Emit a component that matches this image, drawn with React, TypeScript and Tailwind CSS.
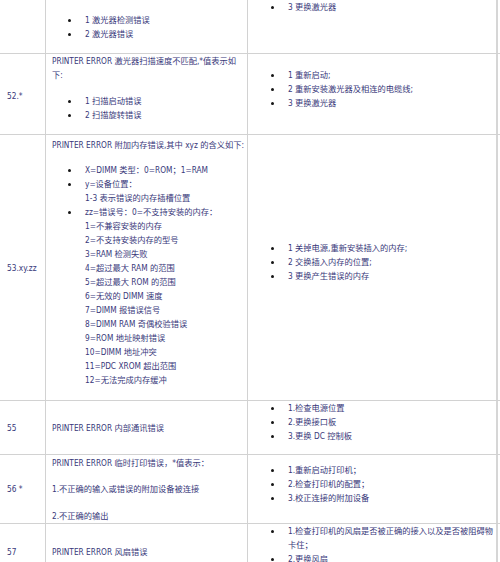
import React from "react";

const Dot = () => (
  <span className="w-[39px] shrink-0 flex">
    <span className="ml-[22px] mt-[5.5px] w-[3px] h-[3px] rounded-full bg-[#151515]" />
  </span>
);

const Li = ({ children }: { children: React.ReactNode }) => (
  <li className="flex whitespace-nowrap">
    <Dot />
    <span>{children}</span>
  </li>
);

const Li3 = ({ children }: { children: React.ReactNode }) => (
  <li className="flex whitespace-nowrap">
    <span className="w-[40px] shrink-0 flex">
      <span className="ml-[23px] mt-[5.5px] w-[3px] h-[3px] rounded-full bg-[#151515]" />
    </span>
    <span>{children}</span>
  </li>
);

export default function App() {
  const c1 = "border-r border-[#d2d2d2] pl-[7px]";
  const c2 = "border-r border-[#d2d2d2]";
  const c3 = "border-r-2 border-[#d6d6d6]";
  const row = "grid grid-cols-[46px_202px_250px] border-b border-[#d2d2d2]";
  return (
    <div className="w-[500px] h-[562px] overflow-hidden bg-white text-[8.25px] leading-[14px] text-[#38387a] font-['DejaVu_Sans_Condensed','DejaVu_Sans','Noto_Sans_CJK_SC',sans-serif]">
      {/* row 0 */}
      <div className={`${row} h-[54px]`}>
        <div className={c1} />
        <div className={`${c2} pt-[13px]`}>
          <ul>
            <Li>1 激光器检测错误</Li>
            <Li>2 激光器错误</Li>
          </ul>
        </div>
        <div className={c3}>
          <ul>
            <Li3>3 更换激光器</Li3>
          </ul>
        </div>
      </div>

      {/* row 1 */}
      <div className={`${row} h-[81px]`}>
        <div className={`${c1} flex items-center pt-[4px]`}>52.*</div>
        <div className={`${c2} pl-[6px]`}>
          <p className="whitespace-nowrap">PRINTER ERROR 激光器扫描速度不匹配,*值表示如</p>
          <p>下:</p>
          <ul className="mt-[12px] -ml-[6px]">
            <Li>1 扫描启动错误</Li>
            <Li>2 扫描旋转错误</Li>
          </ul>
        </div>
        <div className={`${c3} pt-[14px]`}>
          <ul>
            <Li3>1 重新启动;</Li3>
            <Li3>2 重新安装激光器及相连的电缆线;</Li3>
            <Li3>3 更换激光器</Li3>
          </ul>
        </div>
      </div>

      {/* row 2 */}
      <div className={`${row} h-[266px]`}>
        <div className={`${c1} flex items-center`}>53.xy.zz</div>
        <div className={`${c2} pl-[6px] pt-[3px]`}>
          <p className="whitespace-nowrap">PRINTER ERROR 附加内存错误,其中 xyz 的含义如下:</p>
          <ul className="mt-[11px] -ml-[6px]">
            <Li>X=DIMM 类型：0=ROM；1=RAM</Li>
            <Li>
              y=设备位置：
              <br />
              1-3 表示错误的内存插槽位置
            </Li>
            <Li>
              zz=错误号：0=不支持安装的内存：
              <br />
              1=不兼容安装的内存
              <br />
              2=不支持安装内存的型号
              <br />
              3=RAM 检测失败
              <br />
              4=超过最大 RAM 的范围
              <br />
              5=超过最大 ROM 的范围
              <br />
              6=无效的 DIMM 速度
              <br />
              7=DIMM 报错误信号
              <br />
              8=DIMM RAM 奇偶校验错误
              <br />
              9=ROM 地址映射错误
              <br />
              10=DIMM 地址冲突
              <br />
              11=PDC XROM 超出范围
              <br />
              12=无法完成内存缓冲
            </Li>
          </ul>
        </div>
        <div className={`${c3} pt-[106px]`}>
          <ul>
            <Li3>1 关掉电源,重新安装插入的内存;</Li3>
            <Li3>2 交换插入内存的位置;</Li3>
            <Li3>3 更换产生错误的内存</Li3>
          </ul>
        </div>
      </div>

      {/* row 3 */}
      <div className={`${row} h-[54px]`}>
        <div className={`${c1} flex items-center`}>55</div>
        <div className={`${c2} pl-[6px] flex items-center`}>PRINTER ERROR 内部通讯错误</div>
        <div className={c3}>
          <ul>
            <Li3>1.检查电源位置</Li3>
            <Li3>2.更换接口板</Li3>
            <Li3>3.更换 DC 控制板</Li3>
          </ul>
        </div>
      </div>

      {/* row 4 */}
      <div className={`${row} h-[69px]`}>
        <div className={`${c1} flex items-center`}>56 *</div>
        <div className={`${c2} pl-[6px] pt-[1px]`}>
          <p className="whitespace-nowrap">PRINTER ERROR 临时打印错误，*值表示：</p>
          <p className="mt-[12px] whitespace-nowrap">1.不正确的输入或错误的附加设备被连接</p>
          <p className="mt-[13px]">2.不正确的输出</p>
        </div>
        <div className={`${c3} pt-[8px]`}>
          <ul>
            <Li3>1.重新启动打印机；</Li3>
            <Li3>2.检查打印机的配置；</Li3>
            <Li3>3.校正连接的附加设备</Li3>
          </ul>
        </div>
      </div>

      {/* row 5 */}
      <div className={`${row} h-[60px]`}>
        <div className={`${c1} pt-[21px]`}>57</div>
        <div className={`${c2} pl-[6px] pt-[21px]`}>PRINTER ERROR 风扇错误</div>
        <div className={c3}>
          <ul>
            <Li3>
              1.检查打印机的风扇是否被正确的接入以及是否被阻碍物
              <br />
              卡住；
            </Li3>
            <Li3>2.更换风扇</Li3>
          </ul>
        </div>
      </div>
    </div>
  );
}
